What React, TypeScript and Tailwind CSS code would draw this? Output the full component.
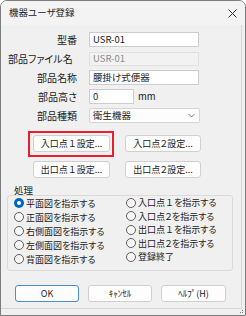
import React from "react";

function D({ c }: { c: string }) {
  return <span className="[font-feature-settings:normal]">{c}</span>;
}

function Radio({ label, checked = false, h }: { label: React.ReactNode; checked?: boolean; h: string }) {
  return (
    <div className={`flex items-center gap-[2px] ${h}`}>
      {checked ? (
        <span className="w-[10px] h-[10px] rounded-full bg-[#0067c0] flex items-center justify-center shrink-0">
          <span className="w-[4px] h-[4px] rounded-full bg-white" />
        </span>
      ) : (
        <span className="w-[10px] h-[10px] rounded-full border border-[#606060] bg-[#f7f7f7] shrink-0" />
      )}
      <span className="text-[9px] leading-none whitespace-nowrap">{label}</span>
    </div>
  );
}

function Btn({ label, w, primary = false }: { label: React.ReactNode; w: string; primary?: boolean }) {
  return (
    <div
      className={`${w} h-[17px] rounded-[3px] bg-[#fdfdfd] border ${
        primary ? "border-[#4a8fd6]" : "border-[#d0d0d0]"
      } flex items-center justify-center text-[9px] leading-none whitespace-nowrap`}
    >
      {label}
    </div>
  );
}

export default function App() {
  return (
    <div className="relative w-[246px] h-[316px] bg-[#f0f0f0] border border-[#7d7d7d] rounded-t-[7px] flex flex-col overflow-hidden font-['Noto_Sans_CJK_JP',sans-serif] [font-feature-settings:'palt'] text-[#1b1b1b]">
      {/* title bar */}
      <div className="h-[24px] flex items-center justify-between pl-[8px] pr-[8px] bg-[#f3f3f3]">
        <span className="text-[9.5px] leading-none">機器ユーザ登録</span>
        <svg width="9" height="9" viewBox="0 0 9 9" className="mt-[1px]">
          <path d="M0.5 0.5 L8.5 8.5 M8.5 0.5 L0.5 8.5" stroke="#333" strokeWidth="1" />
        </svg>
      </div>

      {/* client area */}
      <div className="flex-1 mr-[3px] mb-[6px] border-r border-b border-[#d6d6d6] flex flex-col pt-[7px]">
        {/* form rows */}
        <div className="flex flex-col gap-[4px] pl-[7px]">
          <div className="flex items-center h-[15px]">
            <span className="w-[69px] text-right text-[10px] leading-none">型番</span>
            <div className="ml-[12px] w-[110px] h-[15px] bg-white border border-[#cdcdcd] flex items-center pl-[3px] text-[9.5px] leading-none">
              USR-01
            </div>
          </div>
          <div className="flex items-center h-[15px]">
            <span className="w-[69px] text-left text-[10px] leading-none whitespace-nowrap">部品ファイル名</span>
            <div className="ml-[12px] w-[110px] h-[14px] bg-[#f2f2f2] border border-[#e0e0e0] flex items-center pl-[3px] text-[9.5px] leading-none text-[#8c8c8c]">
              USR-01
            </div>
          </div>
          <div className="flex items-center h-[15px]">
            <span className="w-[69px] text-right text-[10px] leading-none">部品名称</span>
            <div className="ml-[12px] w-[110px] h-[15px] bg-white border border-[#cdcdcd] flex items-center pl-[3px] text-[9.5px] leading-none">
              腰掛け式便器
            </div>
          </div>
          <div className="flex items-center h-[15px]">
            <span className="w-[69px] text-right text-[10px] leading-none">部品高さ</span>
            <div className="ml-[12px] w-[45px] h-[15px] bg-white border border-[#cdcdcd] flex items-center pl-[3px] text-[9.5px] leading-none">
              0
            </div>
            <span className="ml-[4px] text-[9.5px] leading-none">mm</span>
          </div>
          <div className="flex items-center h-[15px]">
            <span className="w-[69px] text-right text-[10px] leading-none">部品種類</span>
            <div className="ml-[12px] w-[111px] h-[15px] bg-[#fdfdfd] border border-[#d4d4d4] rounded-[2px] flex items-center justify-between pl-[3px] pr-[4px] text-[9.5px] leading-none">
              <span>衛生機器</span>
              <svg width="7" height="5" viewBox="0 0 7 5">
                <path d="M0.5 1 L3.5 4 L6.5 1" fill="none" stroke="#555" strokeWidth="0.8" />
              </svg>
            </div>
          </div>
        </div>

        {/* point buttons */}
        <div className="flex flex-col gap-[9px] mt-[12px] pl-[32px]">
          <div className="flex gap-[15px]">
            <div className="relative">
              <Btn label={<>入口点<D c="１" />設定...</>} w="w-[77px]" />
              <div className="absolute -left-[5px] -right-[4px] -top-[4px] -bottom-[5px] border-2 border-[#e8202a]" />
            </div>
            <Btn label={<>入口点２設定...</>} w="w-[76px]" />
          </div>
          <div className="flex gap-[15px]">
            <Btn label={<>出口点<D c="１" />設定...</>} w="w-[77px]" />
            <Btn label={<>出口点２設定...</>} w="w-[76px]" />
          </div>
        </div>

        {/* group */}
        <div className="mt-[8px] pl-[13px] h-[9px] flex items-center text-[9.5px] leading-none">処理</div>
        <div className="ml-[6px] w-[226px] h-[76px] border border-[#dadada] rounded-[3px] flex">
          <div className="w-[118px] pl-[6px] flex flex-col">
            <Radio label="平面図を指示する" checked h="h-[14px]" />
            <Radio label="正面図を指示する" h="h-[14px]" />
            <Radio label="右側面図を指示する" h="h-[14px]" />
            <Radio label="左側面図を指示する" h="h-[14px]" />
            <Radio label="背面図を指示する" h="h-[14px]" />
          </div>
          <div className="flex flex-col">
            <Radio label={<>入口点<D c="１" />を指示する</>} h="h-[13.5px]" />
            <Radio label={<>入口点２を指示する</>} h="h-[13.5px]" />
            <Radio label={<>出口点<D c="１" />を指示する</>} h="h-[13.5px]" />
            <Radio label={<>出口点２を指示する</>} h="h-[13.5px]" />
            <Radio label="登録終了" h="h-[13.5px]" />
          </div>
        </div>

        {/* bottom buttons */}
        <div className="mt-[14px] pl-[14px] flex gap-[9px]">
          <Btn label="OK" w="w-[64px]" primary />
          <Btn label="ｷｬﾝｾﾙ" w="w-[64px]" />
          <Btn label="ﾍﾙﾌﾟ(H)" w="w-[65px]" />
        </div>
      </div>

      {/* resize grip */}
      <svg width="4" height="4" viewBox="0 0 4 4" className="absolute right-[1px] bottom-[1px]">
        <rect x="2" y="0" width="1" height="1" fill="#777" />
        <rect x="0" y="2" width="1" height="1" fill="#777" />
        <rect x="2" y="2" width="1" height="1" fill="#777" />
      </svg>
    </div>
  );
}
